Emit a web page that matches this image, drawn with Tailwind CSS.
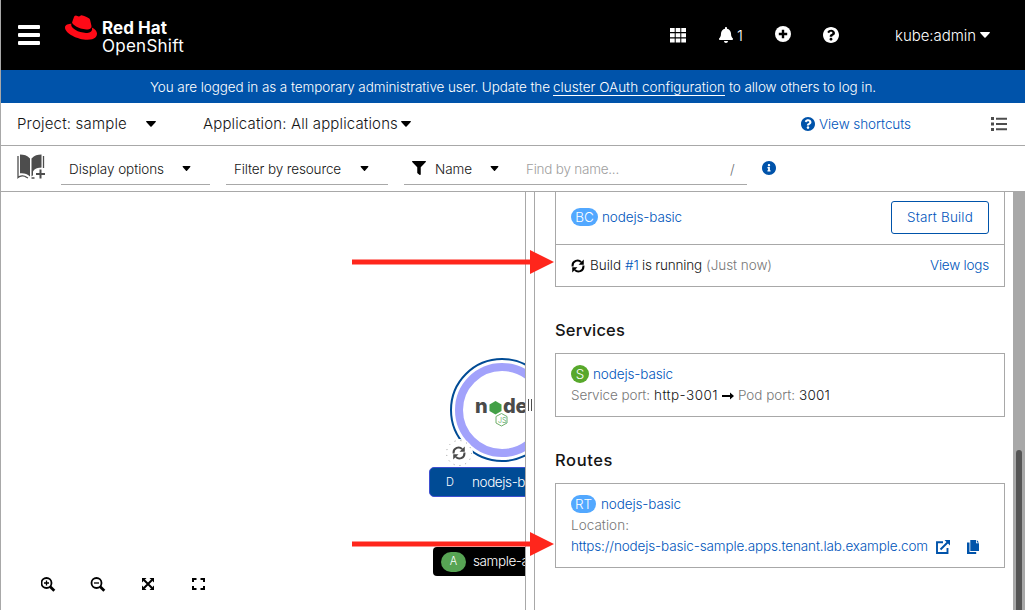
<!DOCTYPE html>
<html lang="en">
<head>
<meta charset="utf-8">
<title>Topology</title>
<script src="https://cdn.jsdelivr.net/npm/@tailwindcss/browser@4"></script>
</head>
<body class="w-[1025px] h-[610px] overflow-hidden whitespace-nowrap bg-white font-['Inter',sans-serif] text-[13.5px] font-light text-[#151515]">
<svg class="hidden">
  <symbol id="help" viewBox="8 8 496 496"><path d="M504 256c0 136.997-111.043 248-248 248S8 392.997 8 256C8 119.083 119.043 8 256 8s248 111.083 248 248zM262.655 90c-54.497 0-89.255 22.957-116.549 63.758-3.536 5.286-2.353 12.415 2.715 16.258l34.699 26.31c5.205 3.947 12.621 3.008 16.665-2.122 17.864-22.658 30.113-35.797 57.303-35.797 20.429 0 45.698 13.148 45.698 32.958 0 14.976-12.363 22.667-32.534 33.976C247.128 238.528 216 254.941 216 296v4c0 6.627 5.373 12 12 12h56c6.627 0 12-5.373 12-12v-1.333c0-28.462 83.186-29.647 83.186-106.667 0-58.002-60.165-102-116.531-102zM256 338c-25.365 0-46 20.635-46 46 0 25.364 20.635 46 46 46s46-20.636 46-46c0-25.365-20.635-46-46-46z"/></symbol>
  <symbol id="caret" viewBox="0 0 10 6"><path d="M.6 0h8.8q.9.1.3.9L5.6 5.6q-.6.5-1.2 0L.3.9Q-.3.1.6 0z"/></symbol>
  <symbol id="sync" viewBox="0 0 16 16"><path d="M1.8 8.6V7.4A5.6 5.6 0 0 1 11.6 3.6M14.2 7.4v1.2A5.6 5.6 0 0 1 4.4 12.4" fill="none" stroke="currentColor" stroke-width="2.3"/><path d="M14.6.6v6H8.6zM1.4 15.4v-6h6z"/></symbol>
</svg>
<div class="flex h-[610px] flex-col border-l border-[#a8a8a8]">
  <header class="flex h-[70px] shrink-0 items-center bg-black text-white">
    <div class="ml-[17px] flex w-[22px] flex-col gap-[4px]">
      <i class="h-[4px] rounded-[1px] bg-white"></i><i class="h-[4px] rounded-[1px] bg-white"></i><i class="h-[4px] rounded-[1px] bg-white"></i>
    </div>
    <svg class="mb-[16px] ml-[25px] h-[25px] w-[32px] shrink-0" viewBox="0 2.8 24 18.4" preserveAspectRatio="none" fill="#ff0a17"><path d="M16.009 13.386c1.577 0 3.86-.326 3.86-2.202a1.765 1.765 0 0 0-.04-.431l-.94-4.08c-.216-.898-.406-1.305-1.982-2.093-1.223-.625-3.888-1.658-4.676-1.658-.733 0-.947.946-1.822.946-.842 0-1.467-.706-2.255-.706-.757 0-1.25.515-1.63 1.576 0 0-1.06 2.99-1.197 3.424a.81.81 0 0 0-.028.245c0 1.162 4.577 4.974 10.71 4.974m4.101-1.435c.218 1.032.218 1.14.218 1.277 0 1.765-1.984 2.745-4.593 2.745-5.895.004-11.06-3.451-11.06-5.734a2.326 2.326 0 0 1 .19-.925C2.746 9.415 0 9.794 0 12.217c0 3.969 9.405 8.861 16.851 8.861 5.71 0 7.149-2.582 7.149-4.62 0-1.605-1.387-3.425-3.887-4.512"/></svg>
    <div class="ml-[5px] mt-[3px] flex w-[120px] flex-col text-[17px] leading-[18px]">
      <b class="font-bold tracking-[0.054px]">Red Hat</b><span class="font-normal tracking-[0.253px]">OpenShift</span>
    </div>
    <svg class="ml-[448px] h-[15px] w-[16px]" viewBox="0 0 16 15" fill="currentColor"><path d="M0 0h4.7v4H0zM5.7 0h4.6v4H5.7zM11.3 0H16v4h-4.700zM0 5.300h4.700v4H0zM5.700 5.300h4.600v4H5.700zM11.300 5.300H16v4h-4.700zM0 10.600h4.700v4H0zM5.700 10.600h4.600v4H5.700zM11.300 10.600H16v4h-4.700z"/></svg>
    <svg class="ml-[33px] h-[16px] w-[14px]" viewBox="0 0 448 512" fill="currentColor"><path d="M224 512c35.320 0 63.970-28.650 63.970-64H160.030c0 35.350 28.650 64 63.970 64zm215.390-149.710c-19.320-20.760-55.470-51.990-55.470-154.290 0-77.700-54.480-139.900-127.940-155.160V32c0-17.670-14.320-32-31.980-32s-31.980 14.330-31.980 32v20.840C118.560 68.100 64.080 130.300 64.080 208c0 102.300-36.150 133.530-55.470 154.290-6 6.450-8.660 14.160-8.610 21.710.110 16.400 12.980 32 32.100 32h383.800c19.120 0 32-15.600 32.100-32 .050-7.550-2.610-15.270-8.610-21.710z"/></svg>
    <span class="ml-[4px] mt-[2px] w-[38px] text-[15px]">1</span>
    <svg class="mb-[2px] h-[16px] w-[16px]" viewBox="0 0 16 16"><circle cx="8" cy="8" r="8" fill="#fff"/><path d="M8 3.800v8.400M3.800 8h8.400" stroke="#000" stroke-width="2.400"/></svg>
    <svg class="ml-[32px] h-[16px] w-[16px]" fill="#fff"><use href="#help"/></svg>
    <span class="ml-[56px] mt-[2px] w-[85px] text-[15px] tracking-[-0.041px]">kube:admin</span>
    <svg class="h-[6px] w-[10px]" fill="#fff"><use href="#caret"/></svg>
  </header>

  <div class="flex h-[33px] shrink-0 items-center bg-[#0053aa] pl-[149px] pt-[2px] text-white">
    <span class="w-[403px] tracking-[-0.083px]">You are logged in as a temporary administrative user. Update the</span>
    <a class="h-[17px] w-[172px] border-b border-white leading-[16px] tracking-[0.02px]">cluster OAuth configuration</a>
    <span class="ml-[4px] tracking-[-0.082px]">to allow others to log in.</span>
  </div>

  <div class="flex h-[43px] shrink-0 items-center border-b border-[#a8a8a8] text-[15px]">
    <span class="ml-[16px] w-[129px] tracking-[0.181px]">Project: sample</span>
    <svg class="h-[6px] w-[10px]"><use href="#caret"/></svg>
    <span class="ml-[47px] w-[198px] tracking-[0.141px]">Application: All applications</span>
    <svg class="h-[6px] w-[10px]"><use href="#caret"/></svg>
    <svg class="ml-[390px] h-[14px] w-[14px]" fill="#0053aa"><use href="#help"/></svg>
    <a class="ml-[4px] w-[172px] text-[13.5px] tracking-[-0.064px] text-[#0055bb]">View shortcuts</a>
    <svg class="h-[14px] w-[16px]" viewBox="0 0 16 14" fill="#4d4d4d"><path d="M0 0h3v3H0zM5 .700h11v2H5zM0 5.500h3v3H0zM5 6h11v2H5zM0 11h3v3H0zM5 11.300h11v2H5z"/></svg>
  </div>

  <div class="flex h-[46px] shrink-0 items-center border-b border-[#a8a8a8]">
    <svg class="mb-[3px] ml-[16px] h-[26px] w-[28px]" viewBox="0 0 28 26" fill="#4d4d4d"><path d="M3 .500c4 0 7 .800 10 4v18c-3-3-6-3.500-10-3.200zM24.500.500c-4 0-7 .800-10 4v18l1.500-1.300v-3.800c2.500-3.500 5-3.500 8.500-3.900z"/><path d="M1 2v21.500c2-1.700 6-2.500 8.500-.200l1.500.700M26.500 2v12M14.500 24h3" fill="none" stroke="#4d4d4d" stroke-width="1.300"/><path d="M23.500 15.500v9M19 20h9" stroke="#4d4d4d" stroke-width="2"/></svg>
    <div class="ml-[16px] mt-[2px] flex h-[31px] w-[149px] items-center border-b border-[#a8a8a8] pl-[8px]">
      <span class="w-[113px] tracking-[-0.056px]">Display options</span><svg class="mb-[2px] h-[5px] w-[9px]" viewBox="0 0 10 6"><use href="#caret"/></svg>
    </div>
    <div class="ml-[16px] mt-[2px] flex h-[31px] w-[162px] items-center border-b border-[#a8a8a8] pl-[8px]">
      <span class="w-[126px] tracking-[-0.135px]">Filter by resource</span><svg class="mb-[2px] h-[5px] w-[9px]" viewBox="0 0 10 6"><use href="#caret"/></svg>
    </div>
    <div class="ml-[16px] mt-[2px] flex h-[31px] w-[343px] items-center border-b border-[#a8a8a8] pl-[8px]">
      <svg class="mb-[2px] h-[14px] w-[14px]" viewBox="0 0 512 512"><path d="M487.976 0H24.028C2.710 0-8.047 25.866 7.058 40.971L192 225.941V432c0 7.831 3.821 15.170 10.237 19.662l80 55.980C298.020 518.690 320 507.493 320 487.980V225.941l184.947-184.970C520.021 25.896 509.338 0 487.976 0z"/></svg>
      <span class="ml-[9px] w-[55px] tracking-[-0.07px]">Name</span><svg class="mb-[2px] h-[5px] w-[9px]" viewBox="0 0 10 6"><use href="#caret"/></svg>
      <span class="ml-[27px] w-[204px] tracking-[-0.235px] text-[#a0a0a0]">Find by name...</span><span class="text-[#6a6e73]">/</span>
    </div>
    <svg class="mb-[2px] ml-[15px] h-[14px] w-[14px]" viewBox="8 8 496 496" fill="#0053aa"><path d="M256 8C119.043 8 8 119.083 8 256c0 136.997 111.043 248 248 248s248-111.003 248-248C504 119.083 392.957 8 256 8zm0 110c23.196 0 42 18.804 42 42s-18.804 42-42 42-42-18.804-42-42 18.804-42 42-42zm56 254c0 6.627-5.373 12-12 12h-88c-6.627 0-12-5.373-12-12v-24c0-6.627 5.373-12 12-12h12v-64h-12c-6.627 0-12-5.373-12-12v-24c0-6.627 5.373-12 12-12h64c6.627 0 12 5.373 12 12v100h12c6.627 0 12 5.373 12 12v24z"/></svg>
  </div>

  <main class="flex min-h-0 flex-1">
    <section class="relative w-[524px] shrink-0 overflow-hidden">
      <svg class="absolute left-[-1px] top-0 h-[418px] w-[526px]" viewBox="0 192 526 418">
        <circle cx="502" cy="410" r="51" fill="#fff" stroke="#004b95" stroke-width="2"/>
        <circle cx="502" cy="410" r="43" fill="#fff" stroke="#a2a2fb" stroke-width="8"/>
        <path d="M495.500 401l6 3.500v6.500l-6 3.500-6-3.500v-6.500z" fill="#43a047"/>
        <g font-family="Inter" font-weight="800" font-size="20" fill="#4a4a4a"><text x="475" y="412.500">n</text><text x="503" y="412.500">d</text><text x="515.500" y="412.500">e</text></g>
        <path d="M501.500 413.500l5.500 3v6.500l-5.500 3-5.500-3v-6.500z" fill="#fff" stroke="#6fae6b"/>
        <text x="498" y="423" font-family="Inter" font-size="7" fill="#43a047">JS</text>
        <circle cx="459" cy="453" r="14" fill="#fff"/>
        <circle cx="459" cy="453" r="12.500" fill="none" stroke="#999" stroke-dasharray="1 5"/>
        <svg x="452" y="446" width="14" height="14" fill="#4a4a4a" color="#4a4a4a"><use href="#sync"/></svg>
      </svg>
      <div class="absolute left-[428px] top-[275px] flex h-[30px] w-[120px] items-center rounded-[5px] border border-[#3f4fd0] bg-[#004b95] text-white">
        <span class="ml-[16px] w-[26px] shrink-0 text-[11px]">D</span><span class="tracking-[-0.4px]">nodejs-basic</span>
      </div>
      <div class="absolute left-[432px] top-[355px] flex h-[29px] w-[120px] items-center rounded-[4px] bg-black text-white">
        <span class="ml-[8px] mr-[7px] flex h-[20px] w-[25px] shrink-0 items-center justify-center rounded-full bg-[#57a454] text-[11px]">A</span><span class="tracking-[-0.4px]">sample-app</span>
      </div>
      <svg class="absolute left-[40px] top-[385px] h-[15px] w-[168px]" viewBox="0 0 168 15" fill="none" stroke="#000" stroke-width="2">
        <circle cx="5.500" cy="6" r="5" stroke-width="1.800"/><path d="M9 9.500l4.300 4.300" stroke-width="2.800"/><path d="M5.500 3.500v5M3 6h5" stroke-width="1.300"/>
        <circle cx="55.500" cy="6" r="5" stroke-width="1.800"/><path d="M59 9.500l4.300 4.300" stroke-width="2.800"/><path d="M53 6h5" stroke-width="1.300"/>
        <path d="M103 3l8 8M111 3l-8 8"/><path d="M101 1h4.500l-4.500 4.500zM113 1v4.500l-4.500-4.500zM101 13h4.500l-4.500-4.500zM113 13v-4.500l-4.500 4.500z" fill="#000" stroke="none"/>
        <path d="M152 5V2h3.500M159.500 2H163v3M152 9v3h3.500M159.500 12H163V9"/>
      </svg>
    </section>
    <div class="flex w-[10px] shrink-0 items-center justify-center gap-[2px] border-x border-[#a8a8a8]">
      <i class="mt-[8px] h-[12px] w-px bg-[#4d4d4d]"></i><i class="mt-[8px] h-[12px] w-px bg-[#4d4d4d]"></i>
    </div>
    <section class="flex w-[470px] shrink-0 flex-col pl-[20px]">
      <div class="border border-t-0 border-[#a8a8a8]">
        <div class="flex h-[53px] items-center border-b border-[#a8a8a8] px-[15px] pb-[2px]">
          <span class="flex h-[18px] w-[27px] items-center justify-center rounded-full bg-[#52a8ff] text-white">BC</span>
          <a class="ml-[4px] tracking-[-0.124px] text-[#0055bb]">nodejs-basic</a>
          <button class="ml-auto h-[33px] w-[98px] rounded-[3px] border border-[#0053aa] tracking-[0.173px] text-[#0055bb]">Start Build</button>
        </div>
        <div class="flex h-[41px] items-center px-[15px]">
          <svg class="h-[14px] w-[14px] text-black"><use href="#sync"/></svg>
          <span class="ml-[5px] w-[35px] tracking-[-0.031px]">Build</span><a class="w-[17px] text-[#0055bb]">#1</a><span class="w-[64px] tracking-[-0.184px]">is running</span><span class="tracking-[-0.05px] text-[#777]">(Just now)</span>
          <a class="ml-auto tracking-[-0.21px] text-[#0055bb]">View logs</a>
        </div>
      </div>
      <h2 class="mt-[31px] h-[24px] text-[16.5px] font-medium leading-[24px] tracking-[0.158px]">Services</h2>
      <div class="mt-[11px] flex h-[64px] flex-col border border-[#a8a8a8] px-[15px] pt-[11px]">
        <div class="flex h-[18px] items-center"><span class="flex h-[18px] w-[18px] items-center justify-center rounded-full bg-[#57a82b] text-white">S</span><a class="ml-[4px] tracking-[-0.124px] text-[#0055bb]">nodejs-basic</a></div>
        <div class="mt-[2px] flex h-[21px] items-center text-[#777]"><span class="w-[83px] tracking-[-0.099px]">Service port:</span><span class="w-[68px] tracking-[0.45px] text-[#151515]">http-3001</span>
          <svg class="mr-[4px] h-[8px] w-[12px]" viewBox="0 0 12 8"><path d="M0 3h8V.500L12 4 8 7.500V5H0z"/></svg>
          <span class="w-[61px] tracking-[-0.042px]">Pod port:</span><span class="tracking-[0.207px] text-[#151515]">3001</span></div>
      </div>
      <h2 class="mt-[31px] h-[24px] text-[16.5px] font-medium leading-[24px] tracking-[0.602px]">Routes</h2>
      <div class="mt-[11px] flex h-[85px] flex-col border border-[#a8a8a8] px-[15px] pt-[11px]">
        <div class="flex h-[18px] items-center"><span class="flex h-[18px] w-[25px] items-center justify-center rounded-full bg-[#52a8ff] text-white">RT</span><a class="ml-[5px] tracking-[-0.124px] text-[#0055bb]">nodejs-basic</a></div>
        <div class="mt-[2px] h-[21px] leading-[21px] tracking-[0.038px] text-[#777]">Location:</div>
        <div class="flex h-[21px] items-center text-[#0055bb]"><a class="w-[365px] tracking-[-0.139px]">https://nodejs-basic-sample.apps.tenant.lab.example.com</a>
          <svg class="h-[14px] w-[14px]" viewBox="0 0 14 14" fill="none" stroke="#0053aa" stroke-width="1.900"><path d="M7 2.300H1V13h10.500V8M4.500 9.500l7.500-7.500"/><path d="M8.500 0H14v5.500z" fill="#0053aa" stroke="none"/></svg>
          <svg class="ml-[17px] h-[14px] w-[12px]" viewBox="0 0 12 14" fill="#0053aa"><path d="M3.300 0H9v3.200h3V11H3.300zM9.800 0L12 2.400H9.800zM0 2.500h2.500v9.400h6.700V14H0z"/></svg>
        </div>
      </div>
    </section>
    <div class="ml-auto h-full w-[12px] bg-[#a8a8a8] pt-[258px]"><div class="ml-[3px] h-[160px] w-[6px] rounded-t-full bg-[#555]"></div></div>
  </main>
</div>
<svg class="absolute left-[352px] top-[249px] h-[26px] w-[203px]" viewBox="0 0 203 26" fill="#ff261c"><path d="M0 10.500h178V1l24 12-24 12v-9.500H0z"/></svg>
<svg class="absolute left-[352px] top-[531px] h-[26px] w-[203px]" viewBox="0 0 203 26" fill="#ff261c"><path d="M0 10.500h178V1l24 12-24 12v-9.500H0z"/></svg>
</body>
</html>
